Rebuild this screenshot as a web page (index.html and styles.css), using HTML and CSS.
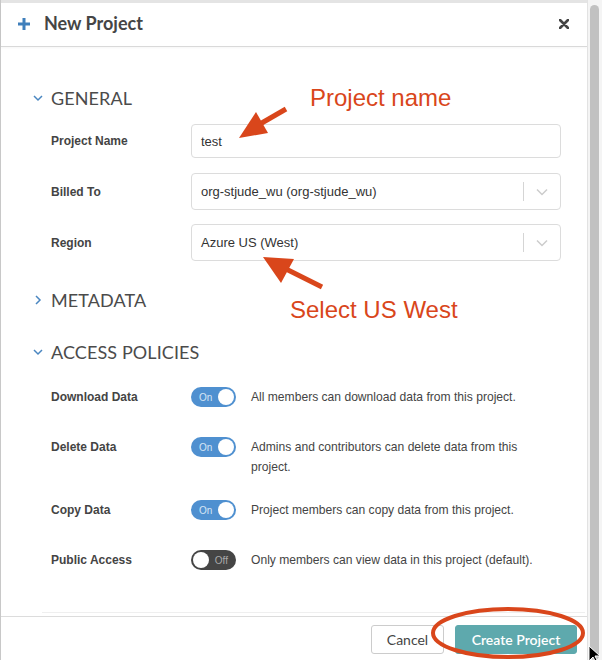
FILE: index.html
```html
<!DOCTYPE html>
<html>
<head>
<meta charset="utf-8">
<link rel="stylesheet" href="styles.css">
</head>
<body>
<div class="page">
  <div class="modal">
    <div class="topstrip"></div>
    <div class="header">
      <svg class="plus" width="12" height="12" viewBox="0 0 12 12"><path d="M6 0v12M0 6h12" stroke="#3f7fbb" stroke-width="3"/></svg>
      <span class="title">New Project</span>
      <svg class="close" width="10" height="10" viewBox="0 0 10 10"><path d="M1 1L9 9M9 1L1 9" stroke="#444" stroke-width="2.6" stroke-linecap="round"/></svg>
    </div>
    <div class="body">
      <div class="section-head">
        <svg class="chev" width="10" height="10" viewBox="0 0 10 10"><path d="M1 3l4 4 4-4" fill="none" stroke="#4a86c0" stroke-width="1.5"/></svg>
        <span>GENERAL</span>
      </div>
      <div class="field">
        <label class="lbl">Project Name</label>
        <div class="input">test</div>
      </div>
      <div class="field sel-field">
        <label class="lbl">Billed To</label>
        <div class="select"><span class="val">org-stjude_wu (org-stjude_wu)</span><span class="sep"></span><svg class="dd" width="12" height="8" viewBox="0 0 12 8"><path d="M1 1.5l5 5 5-5" fill="none" stroke="#ccc" stroke-width="1.5"/></svg></div>
      </div>
      <div class="field sel-field region">
        <label class="lbl">Region</label>
        <div class="select"><span class="val">Azure US (West)</span><span class="sep"></span><svg class="dd" width="12" height="8" viewBox="0 0 12 8"><path d="M1 1.5l5 5 5-5" fill="none" stroke="#ccc" stroke-width="1.5"/></svg></div>
      </div>
      <div class="section-head meta">
        <svg class="chev" width="10" height="10" viewBox="0 0 10 10"><path d="M3 1l4 4-4 4" fill="none" stroke="#4a86c0" stroke-width="1.5"/></svg>
        <span>METADATA</span>
      </div>
      <div class="section-head access">
        <svg class="chev" width="10" height="10" viewBox="0 0 10 10"><path d="M1 3l4 4 4-4" fill="none" stroke="#4a86c0" stroke-width="1.5"/></svg>
        <span>ACCESS POLICIES</span>
      </div>
      <div class="policy">
        <label class="lbl">Download Data</label>
        <div class="toggle on"><span class="tt">On</span><span class="knob"></span></div>
        <p class="desc">All members can download data from this project.</p>
      </div>
      <div class="policy">
        <label class="lbl">Delete Data</label>
        <div class="toggle on"><span class="tt">On</span><span class="knob"></span></div>
        <p class="desc">Admins and contributors can delete data from this project.</p>
      </div>
      <div class="policy">
        <label class="lbl">Copy Data</label>
        <div class="toggle on"><span class="tt">On</span><span class="knob"></span></div>
        <p class="desc">Project members can copy data from this project.</p>
      </div>
      <div class="policy">
        <label class="lbl">Public Access</label>
        <div class="toggle off"><span class="knob"></span><span class="tt">Off</span></div>
        <p class="desc">Only members can view data in this project (default).</p>
      </div>
      <div class="body-rule"></div>
    </div>
    <div class="footer">
      <button class="btn cancel">Cancel</button>
      <button class="btn create">Create Project</button>
    </div>
  </div>
  <div class="scrolltrack"><div class="thumb"></div></div>

  <svg class="overlay" width="602" height="660" viewBox="0 0 602 660">
    <path d="M286 109L260 124" stroke="#d9461b" stroke-width="5"/>
    <polygon points="239,138 256,112 268,133" fill="#d9461b"/>
    <path d="M322 287L286 269" stroke="#d9461b" stroke-width="5"/>
    <polygon points="263,257 294,259 281,283" fill="#d9461b"/>
    <ellipse cx="508" cy="633" rx="75" ry="24" fill="none" stroke="#d9461b" stroke-width="4"/>
    <path d="M589 646v15l4-4 3 6 2-1-3-6h5z" fill="#000" stroke="#fff" stroke-width="1"/>
  </svg>
  <div class="note note1">Project name</div>
  <div class="note note2">Select US West</div>
</div>
</body>
</html>
```

FILE: styles.css
```css
* { box-sizing: border-box; }
html, body { margin: 0; padding: 0; }
body { background: #fff; width: 602px; height: 660px; overflow: hidden; }

.page {
  position: relative;
  display: flex;
  width: 602px;
  height: 660px;
}

.modal {
  width: 587px;
  height: 660px;
  display: flex;
  flex-direction: column;
  border-left: 1px solid #c8c8c8;
  background: #fff;
}

.topstrip {
  height: 3px;
  background: #e4e4e4;
  flex: none;
}

.header {
  flex: none;
  height: 44px;
  border-bottom: 1px solid #d9d9d9;
  display: flex;
  align-items: center;
  padding-left: 17px;
  padding-right: 18px;
  box-shadow: 0 1px 2px rgba(0,0,0,0.04);
}
.plus { flex: none; margin-top: -1px; }
.title {
  font-family: Lato, "Liberation Sans", sans-serif;
  font-weight: 700;
  font-size: 18px;
  color: #454545;
  margin-left: 14px;
  margin-top: -3px;
}
.close { margin-left: auto; margin-top: -1px; }

.body {
  flex: 1;
  display: flex;
  flex-direction: column;
  padding-top: 39px;
  padding-bottom: 3px;
}

.section-head {
  display: flex;
  align-items: center;
  height: 24px;
  padding-left: 32px;
  font-family: Lato, "Liberation Sans", sans-serif;
  font-size: 18px;
  color: #4b4b4b;
  letter-spacing: 0.1px;
}
.section-head .chev { margin-right: 8px; flex: none; }
.section-head.meta { margin-top: 27px; }
.section-head.access { margin-top: 28px; }

.field {
  display: flex;
  align-items: center;
  padding-left: 50px;
  margin-top: 14px;
}
.field.sel-field { margin-top: 15px; }
.field.region { margin-top: 14px; }

.lbl {
  width: 140px;
  flex: none;
  font-family: "Liberation Sans", Arial, sans-serif;
  font-weight: 700;
  font-size: 12px;
  color: #444;
}

.input {
  width: 370px;
  height: 34px;
  border: 1px solid #dcdcdc;
  border-radius: 4px;
  padding-left: 9px;
  display: flex;
  align-items: center;
  font-family: "Liberation Sans", Arial, sans-serif;
  font-size: 13px;
  color: #333;
}

.select {
  width: 370px;
  height: 37px;
  border: 1px solid #dcdcdc;
  border-radius: 4px;
  padding-left: 9px;
  display: flex;
  align-items: center;
  font-family: "Liberation Sans", Arial, sans-serif;
  font-size: 13px;
  color: #333;
}
.select .val { flex: 1; }
.select .sep {
  width: 1px;
  height: 19px;
  background: #d5d5d5;
  margin-right: 12px;
}
.select .dd { margin-right: 12px; }

.policy {
  display: flex;
  align-items: flex-start;
  padding-left: 50px;
  min-height: 27px;
  margin-bottom: 23px;
}
.section-head.access + .policy { margin-top: 23px; }
.policy .lbl { line-height: 20px; }

.toggle {
  flex: none;
  width: 45px;
  height: 20px;
  border-radius: 10px;
  display: flex;
  align-items: center;
  padding: 0 2px 0 8px;
  font-family: "Liberation Sans", Arial, sans-serif;
  font-size: 10px;
}
.toggle.on { background: #4f90d0; color: #d5e5f5; justify-content: space-between; }
.toggle.off { background: #454545; color: #aaa; padding: 0 8px 0 2px; justify-content: space-between; }
.knob {
  width: 16px;
  height: 16px;
  border-radius: 50%;
  background: #fff;
}

.desc {
  margin: 0 0 0 15px;
  width: 285px;
  font-family: "Liberation Sans", Arial, sans-serif;
  font-size: 12.1px;
  line-height: 20px;
  color: #444;
}

.body-rule {
  margin-top: auto;
  margin-left: 41px;
  margin-right: 2px;
  border-top: 1px solid #efefef;
}

.footer {
  flex: none;
  height: 44px;
  border-top: 1px solid #dcdcdc;
  display: flex;
  justify-content: flex-end;
  align-items: flex-start;
  padding-top: 8px;
  padding-right: 10px;
  gap: 11px;
}
.btn {
  height: 29px;
  border-radius: 3px;
  font-family: Lato, "Liberation Sans", sans-serif;
  font-size: 14px;
  padding: 0 0 1px;
  cursor: pointer;
}
.btn.cancel {
  width: 73px;
  background: #fff;
  border: 1px solid #ccc;
  color: #444;
}
.btn.create {
  width: 122px;
  background: #5ea9ad;
  border: 1px solid #5ea9ad;
  color: #fff;
  font-weight: 600;
}

.scrolltrack {
  flex: none;
  width: 15px;
  height: 660px;
  background: #f4f4f4;
  border-left: 1px solid #e2e2e2;
  padding: 5px 3px 0 2px;
}
.thumb {
  width: 9px;
  height: 655px;
  border-radius: 5px;
  background: #c1c1c1;
}

.overlay {
  position: absolute;
  left: 0;
  top: 0;
  pointer-events: none;
}

.note {
  position: absolute;
  font-family: "Liberation Sans", Arial, sans-serif;
  font-size: 24px;
  color: #d9461b;
  white-space: nowrap;
}
.note1 { left: 310px; top: 84px; }
.note2 { left: 290px; top: 296px; }
```
